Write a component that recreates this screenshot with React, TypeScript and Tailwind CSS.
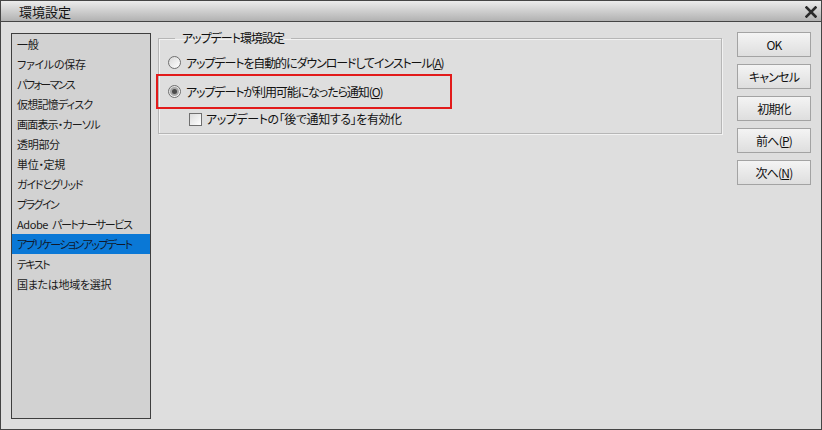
import React from "react";

const jp = "font-['Noto_Sans_CJK_JP','Noto_Sans',sans-serif] [font-feature-settings:'palt']";

// カタカナが多い項目は参照画面で詰まって見えるので字間を詰める
const menuItems: { label: React.ReactNode; key: string; track: string }[] = [
  { key: "general", label: "一般", track: "tracking-[-0.3px]" },
  { key: "save", label: "ファイルの保存", track: "tracking-[-0.3px]" },
  { key: "perf", label: "パフォーマンス", track: "tracking-[-1.6px]" },
  { key: "scratch", label: "仮想記憶ディスク", track: "tracking-[-0.8px]" },
  { key: "display", label: "画面表示・カーソル", track: "tracking-[-0.8px]" },
  { key: "trans", label: "透明部分", track: "tracking-[-0.3px]" },
  { key: "units", label: "単位・定規", track: "tracking-[-0.3px]" },
  { key: "guides", label: "ガイドとグリッド", track: "tracking-[-1.2px]" },
  { key: "plugins", label: "プラグイン", track: "tracking-[-1.6px]" },
  {
    key: "adobe",
    label: (
      <>
        <span className="mr-[4px] tracking-[-0.4px]">Adobe</span>パートナーサービス
      </>
    ),
    track: "tracking-[-1.4px]",
  },
  { key: "update", label: "アプリケーションアップデート", track: "tracking-[-1.6px]" },
  { key: "text", label: "テキスト", track: "tracking-[-1.6px]" },
  { key: "region", label: "国または地域を選択", track: "tracking-[-0.3px]" },
];

const Radio = ({ checked }: { checked?: boolean }) => (
  <span className="flex h-[13px] w-[13px] shrink-0 items-center justify-center rounded-full border border-[#6f6f6f] bg-gradient-to-br from-[#d8d8d8] to-white">
    {checked && <span className="h-[5px] w-[5px] rounded-full bg-[#4a4a4a] ring-2 ring-[#a8a8a8]" />}
  </span>
);

const Btn = ({ children }: { children: React.ReactNode }) => (
  <button
    type="button"
    className={`flex h-[25px] w-[74px] items-center justify-center border border-[#a3a3a3] bg-gradient-to-b from-[#f4f4f4] to-[#dedede] text-[12px] tracking-[-0.8px] text-[#111] ${jp}`}
  >
    {children}
  </button>
);

export default function App() {
  return (
    <div className={`relative flex h-[430px] w-[822px] flex-col border border-[#454545] bg-[#dedede] ${jp}`}>
      {/* タイトルバー */}
      <div className="flex h-[21px] shrink-0 items-center justify-between border-b border-[#454545] bg-gradient-to-b from-[#ececec] to-[#b2b2b2] pl-[18px] pr-[4px]">
        <span className="text-[13px] leading-none text-[#111]">環境設定</span>
        <svg width="12" height="12" viewBox="0 0 12 12" className="mt-[1px]">
          <path d="M1.5 1.5 L10.5 10.5 M10.5 1.5 L1.5 10.5" stroke="#2b2b2b" strokeWidth="2.6" strokeLinecap="square" />
        </svg>
      </div>

      <div className="flex flex-1 items-start pl-[10px]">
        {/* サイドメニュー */}
        <div className="mt-[11px] h-[386px] w-[140px] shrink-0 overflow-hidden border border-[#3e3e3e] bg-[#d2d2d2]">
          {menuItems.map((item, i) => (
            <div
              key={item.key}
              className={`flex h-[20px] items-center whitespace-pre pl-[5px] text-[11px] leading-none ${item.track} ${
                i === 10 ? "bg-[#0a78d6] text-[#10182a]" : "text-[#1a1a1a]"
              }`}
            >
              {item.label}
            </div>
          ))}
        </div>

        {/* 設定グループ */}
        <fieldset className="ml-[7px] mt-[8px] h-[104px] w-[564px] shrink-0 border border-[#b6b6b6] pl-[9px] shadow-[inset_1px_1px_0_#f2f2f2,1px_1px_0_#f2f2f2]">
          <legend className="ml-[7px] px-[7px] text-[12px] leading-[16px] tracking-[-1px] text-[#111]">アップデート環境設定</legend>
          <div className="mt-[2px] flex flex-col text-[12px] text-[#111]">
            <label className="flex h-[29px] items-center gap-[5px]">
              <Radio />
              <span className="tracking-[-1.1px]">
                アップデートを自動的にダウンロードしてインストール(<u>A</u>)
              </span>
            </label>
            <label className="flex h-[29px] items-center gap-[5px]">
              <Radio checked />
              <span className="tracking-[-1.1px]">
                アップデートが利用可能になったら通知(<u>O</u>)
              </span>
            </label>
            <label className="ml-[21px] flex h-[26px] items-center gap-[4px]">
              <span className="h-[13px] w-[13px] shrink-0 border border-[#6f6f6f] bg-gradient-to-br from-[#dcdcdc] to-white" />
              <span className="tracking-[-0.4px]">アップデートの「後で通知する」を有効化</span>
            </label>
          </div>
        </fieldset>

        {/* ボタン */}
        <div className="ml-[15px] mt-[10px] flex flex-col gap-[7px]">
          <Btn>OK</Btn>
          <Btn>キャンセル</Btn>
          <Btn>初期化</Btn>
          <Btn>
            前へ(<u>P</u>)
          </Btn>
          <Btn>
            次へ(<u>N</u>)
          </Btn>
        </div>
      </div>

      {/* 注目枠 */}
      <div className="pointer-events-none absolute left-[155px] top-[73px] h-[35px] w-[296px] border-2 border-[#e21a1a]" />
    </div>
  );
}
